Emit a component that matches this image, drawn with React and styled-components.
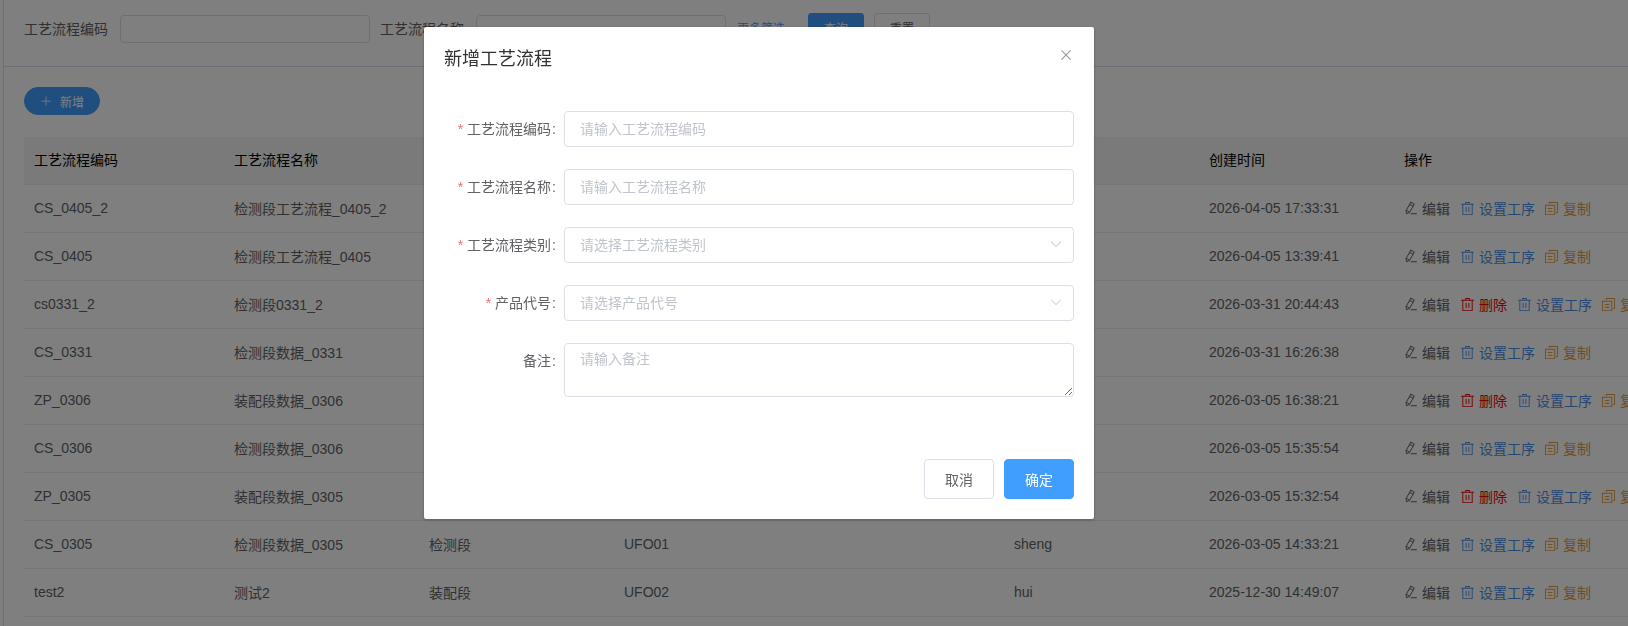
import React from "react";
import styled, { createGlobalStyle } from "styled-components";

const GlobalStyle = createGlobalStyle`
  html, body {
    margin: 0;
    padding: 0;
    height: 100%;
    overflow: hidden;
    background: #fff;
    font-family: "Liberation Sans", "Noto Sans CJK SC", sans-serif;
    font-size: 14px;
    color: #606266;
  }
  * {
    box-sizing: border-box;
  }
`;

const ICONS = {
  edit: "m199.04 672.64 193.984 112 224-387.968-193.92-112-224 388.032zm-23.872 60.16 32.896 148.288 144.896-45.696L175.168 732.8zM455.04 229.248l193.92 112 56.704-98.112-193.984-112-56.64 98.112zM104.32 708.8l384-665.024 304.768 175.936L409.152 884.8h.064l-248.448 78.336L104.32 708.8zm384 254.272v-64h448v64h-448z",
  trash: "M160 256H96a32 32 0 0 1 0-64h256V95.936a32 32 0 0 1 32-32h256a32 32 0 0 1 32 32V192h256a32 32 0 1 1 0 64h-64v672a32 32 0 0 1-32 32H192a32 32 0 0 1-32-32V256zm448-64v-64H416v64h192zM224 896h576V256H224v640zm192-128a32 32 0 0 1-32-32V416a32 32 0 0 1 64 0v320a32 32 0 0 1-32 32zm192 0a32 32 0 0 1-32-32V416a32 32 0 0 1 64 0v320a32 32 0 0 1-32 32z",
  copy: "M128 320v576h576V320H128zm-32-64h640a32 32 0 0 1 32 32v640a32 32 0 0 1-32 32H96a32 32 0 0 1-32-32V288a32 32 0 0 1 32-32zM960 96v704a32 32 0 0 1-32 32h-96v-64h64V128H384v64h-64V96a32 32 0 0 1 32-32h576a32 32 0 0 1 32 32zM256 672h320v64H256v-64zm0-192h320v64H256v-64z",
  plus: "M480 480V128a32 32 0 0 1 64 0v352h352a32 32 0 0 1 0 64H544v352a32 32 0 1 1-64 0V544H128a32 32 0 0 1 0-64h352z",
  down: "M831.872 340.864 512 652.672 192.128 340.864a30.592 30.592 0 0 0-42.752 0 29.12 29.12 0 0 0 0 41.6L489.664 714.24a32 32 0 0 0 44.672 0l340.288-331.712a29.12 29.12 0 0 0 0-41.728 30.592 30.592 0 0 0-42.752 0z",
  close: "M764.288 214.592 512 466.88 259.712 214.592a31.936 31.936 0 0 0-45.12 45.12L466.752 512 214.528 764.224a31.936 31.936 0 1 0 45.12 45.184L512 557.184l252.288 252.288a31.936 31.936 0 0 0 45.12-45.12L557.12 512.064l252.288-252.352a31.936 31.936 0 1 0-45.12-45.184z",
};

function Icon({ name, size = 14 }) {
  return (
    <svg width={size} height={size} viewBox="0 0 1024 1024" fill="currentColor" style={{ flexShrink: 0 }}>
      <path d={ICONS[name]} />
    </svg>
  );
}

const rows = [
  { code: "CS_0405_2", name: "检测段工艺流程_0405_2", type: "检测段", product: "UFO01", user: "sheng", time: "2026-04-05 17:33:31" },
  { code: "CS_0405", name: "检测段工艺流程_0405", type: "检测段", product: "UFO01", user: "sheng", time: "2026-04-05 13:39:41" },
  { code: "cs0331_2", name: "检测段0331_2", type: "检测段", product: "UFO01", user: "sheng", time: "2026-03-31 20:44:43", removable: true },
  { code: "CS_0331", name: "检测段数据_0331", type: "检测段", product: "UFO01", user: "sheng", time: "2026-03-31 16:26:38" },
  { code: "ZP_0306", name: "装配段数据_0306", type: "装配段", product: "UFO01", user: "sheng", time: "2026-03-05 16:38:21", removable: true },
  { code: "CS_0306", name: "检测段数据_0306", type: "检测段", product: "UFO01", user: "sheng", time: "2026-03-05 15:35:54" },
  { code: "ZP_0305", name: "装配段数据_0305", type: "装配段", product: "UFO01", user: "sheng", time: "2026-03-05 15:32:54", removable: true },
  { code: "CS_0305", name: "检测段数据_0305", type: "检测段", product: "UFO01", user: "sheng", time: "2026-03-05 14:33:21" },
  { code: "test2", name: "测试2", type: "装配段", product: "UFO02", user: "hui", time: "2025-12-30 14:49:07" },
];

const formFields = [
  { label: "工艺流程编码", placeholder: "请输入工艺流程编码", required: true },
  { label: "工艺流程名称", placeholder: "请输入工艺流程名称", required: true },
  { label: "工艺流程类别", placeholder: "请选择工艺流程类别", required: true, select: true },
  { label: "产品代号", placeholder: "请选择产品代号", required: true, select: true },
];

function App() {
  return (
    <>
      <GlobalStyle />
      <Page>
        <SearchBar>
          <SearchLabel>工艺流程编码</SearchLabel>
          <SearchInput />
          <SearchLabel>工艺流程名称</SearchLabel>
          <SearchInput />
          <MoreLink>
            更多筛选
            <Icon name="down" size={10} />
          </MoreLink>
          <SearchButton $primary>查询</SearchButton>
          <SearchButton>重置</SearchButton>
        </SearchBar>

        <Content>
          <AddButton>
            <Icon name="plus" size={12} />
            新增
          </AddButton>
          <Table>
            <colgroup>
              <col width="200" />
              <col width="195" />
              <col width="195" />
              <col width="390" />
              <col width="195" />
              <col width="195" />
              <col width="300" />
            </colgroup>
            <thead>
              <tr>
                <HeadCell>工艺流程编码</HeadCell>
                <HeadCell>工艺流程名称</HeadCell>
                <HeadCell>工艺流程类别</HeadCell>
                <HeadCell>产品代号</HeadCell>
                <HeadCell>创建人</HeadCell>
                <HeadCell>创建时间</HeadCell>
                <HeadCell>操作</HeadCell>
              </tr>
            </thead>
            <tbody>
              {rows.map((row) => (
                <tr key={row.code}>
                  <Cell>{row.code}</Cell>
                  <Cell>{row.name}</Cell>
                  <Cell>{row.type}</Cell>
                  <Cell>{row.product}</Cell>
                  <Cell>{row.user}</Cell>
                  <Cell>{row.time}</Cell>
                  <Cell>
                    <Actions>
                      <Action $color="#606266">
                        <Icon name="edit" />
                        编辑
                      </Action>
                      {row.removable && (
                        <TrashAction $color="#f00000">
                          <Icon name="trash" size={15} />
                          删除
                        </TrashAction>
                      )}
                      <TrashAction $color="#4a90e2">
                        <Icon name="trash" size={15} />
                        设置工序
                      </TrashAction>
                      <CopyAction $color="#e69a3c">
                        <Icon name="copy" size={15} />
                        复制
                      </CopyAction>
                    </Actions>
                  </Cell>
                </tr>
              ))}
            </tbody>
          </Table>
        </Content>
      </Page>

      <Mask>
        <Dialog>
          <DialogHeader>
            <DialogTitle>新增工艺流程</DialogTitle>
            <CloseButton>
              <Icon name="close" size={16} />
            </CloseButton>
          </DialogHeader>
          <DialogBody>
            {formFields.map((field) => (
              <FormRow key={field.label}>
                <FormLabel $required={field.required}>{field.label}</FormLabel>
                {field.select ? (
                  <SelectBox>
                    {field.placeholder}
                    <Icon name="down" size={14} />
                  </SelectBox>
                ) : (
                  <TextInput placeholder={field.placeholder} />
                )}
              </FormRow>
            ))}
            <FormRow>
              <FormLabel>备注</FormLabel>
              <TextArea placeholder="请输入备注" />
            </FormRow>
          </DialogBody>
          <DialogFooter>
            <FooterButton>取消</FooterButton>
            <FooterButton $primary>确定</FooterButton>
          </DialogFooter>
        </Dialog>
      </Mask>
    </>
  );
}

export default App;

const Page = styled.div`
  width: 1628px;
  height: 626px;
  padding-left: 4px;
  overflow: hidden;
  position: relative;
  &::before {
    content: "";
    position: absolute;
    left: 3px;
    top: 0;
    bottom: 0;
    width: 1px;
    background: #d8dfea;
  }
`;

const SearchBar = styled.div`
  height: 67px;
  padding: 13px 0 0 20px;
  display: flex;
  align-items: flex-start;
  border-bottom: 1px solid #d8dfea;
`;

const SearchLabel = styled.span`
  width: 96px;
  line-height: 28px;
  margin-top: 2px;
  color: #606266;
`;

const SearchInput = styled.div`
  width: 250px;
  height: 28px;
  margin: 2px 10px 0 0;
  border: 1px solid #dcdfe6;
  border-radius: 4px;
  background: #fff;
`;

const MoreLink = styled.span`
  width: 71px;
  margin-left: 1px;
  display: flex;
  align-items: center;
  gap: 2px;
  line-height: 28px;
  font-size: 12px;
  margin-top: 2px;
  color: #409eff;
`;

const SearchButton = styled.button`
  width: 56px;
  height: 28px;
  margin-right: 10px;
  padding: 0;
  border: 1px solid ${(p) => (p.$primary ? "#409eff" : "#dcdfe6")};
  border-radius: 3px;
  background: ${(p) => (p.$primary ? "#409eff" : "#fff")};
  color: ${(p) => (p.$primary ? "#fff" : "#606266")};
  font: inherit;
  font-size: 12px;
`;

const Content = styled.div`
  padding: 20px 0 0 20px;
`;

const AddButton = styled.button`
  width: 76px;
  height: 28px;
  display: flex;
  align-items: center;
  justify-content: center;
  gap: 8px;
  padding: 0;
  border: 1px solid #409eff;
  border-radius: 14px;
  background: #409eff;
  color: #fff;
  font: inherit;
  font-size: 12px;
`;

const Table = styled.table`
  width: 1670px;
  margin-top: 22px;
  border-collapse: collapse;
  table-layout: fixed;
`;

const HeadCell = styled.th`
  height: 47px;
  padding: 0 10px 3px;
  background: #f5f5f5;
  border-bottom: 1px solid #ebeef5;
  color: #000;
  font-weight: 400;
  text-align: left;
  white-space: nowrap;
`;

const Cell = styled.td`
  height: 48px;
  padding: 0 10px;
  border-bottom: 1px solid #ebeef5;
  color: #606266;
  white-space: nowrap;
`;

const Actions = styled.div`
  display: flex;
  gap: 11px;
`;

const Action = styled.span`
  display: flex;
  align-items: center;
  gap: 4px;
  color: ${(p) => p.$color};
`;

const TrashAction = styled(Action)`
  margin-left: -1px;
`;

const CopyAction = styled(Action)`
  margin-left: -2px;
`;

const Mask = styled.div`
  position: fixed;
  inset: 0;
  padding: 27px 0 0 424px;
  background: rgba(0, 0, 0, 0.5);
`;

const Dialog = styled.div`
  width: 670px;
  height: 492px;
  background: #fff;
  border-radius: 2px;
  box-shadow: 0 1px 3px rgba(0, 0, 0, 0.3);
`;

const DialogHeader = styled.div`
  height: 54px;
  padding: 20px 20px 10px;
  display: flex;
  justify-content: space-between;
`;

const DialogTitle = styled.span`
  font-size: 18px;
  line-height: 24px;
  color: #303133;
`;

const CloseButton = styled.span`
  display: flex;
  height: 16px;
  color: #909399;
`;

const DialogBody = styled.div`
  padding: 30px 20px;
`;

const FormRow = styled.div`
  display: flex;
  margin-bottom: 22px;
`;

const FormLabel = styled.label`
  width: 120px;
  padding-right: 8px;
  line-height: 36px;
  text-align: right;
  color: #606266;
  flex-shrink: 0;
  &::before {
    content: ${(p) => (p.$required ? '"*"' : "none")};
    color: #f56c6c;
    margin-right: 4px;
  }
  &::after {
    content: ":";
    margin-left: 1px;
  }
`;

const TextInput = styled.input`
  flex: 1;
  height: 36px;
  padding: 0 15px;
  border: 1px solid #dcdfe6;
  border-radius: 4px;
  outline: none;
  font: inherit;
  color: #606266;
  &::placeholder {
    color: #c0c4cc;
    opacity: 1;
  }
`;

const SelectBox = styled.div`
  flex: 1;
  height: 36px;
  padding: 0 10px 2px 15px;
  display: flex;
  align-items: center;
  justify-content: space-between;
  border: 1px solid #dcdfe6;
  border-radius: 4px;
  color: #c0c4cc;
`;

const TextArea = styled.textarea`
  flex: 1;
  height: 54px;
  padding: 5px 15px;
  border: 1px solid #dcdfe6;
  border-radius: 4px;
  outline: none;
  font: inherit;
  line-height: 1.5;
  color: #606266;
  resize: vertical;
  display: block;
  &::placeholder {
    color: #c0c4cc;
    opacity: 1;
  }
`;

const DialogFooter = styled.div`
  padding: 10px 20px 20px;
  display: flex;
  justify-content: flex-end;
  gap: 10px;
`;

const FooterButton = styled.button`
  width: 70px;
  height: 40px;
  padding: 0;
  border: 1px solid ${(p) => (p.$primary ? "#409eff" : "#dcdfe6")};
  border-radius: 4px;
  background: ${(p) => (p.$primary ? "#409eff" : "#fff")};
  color: ${(p) => (p.$primary ? "#fff" : "#606266")};
  font: inherit;
`;
